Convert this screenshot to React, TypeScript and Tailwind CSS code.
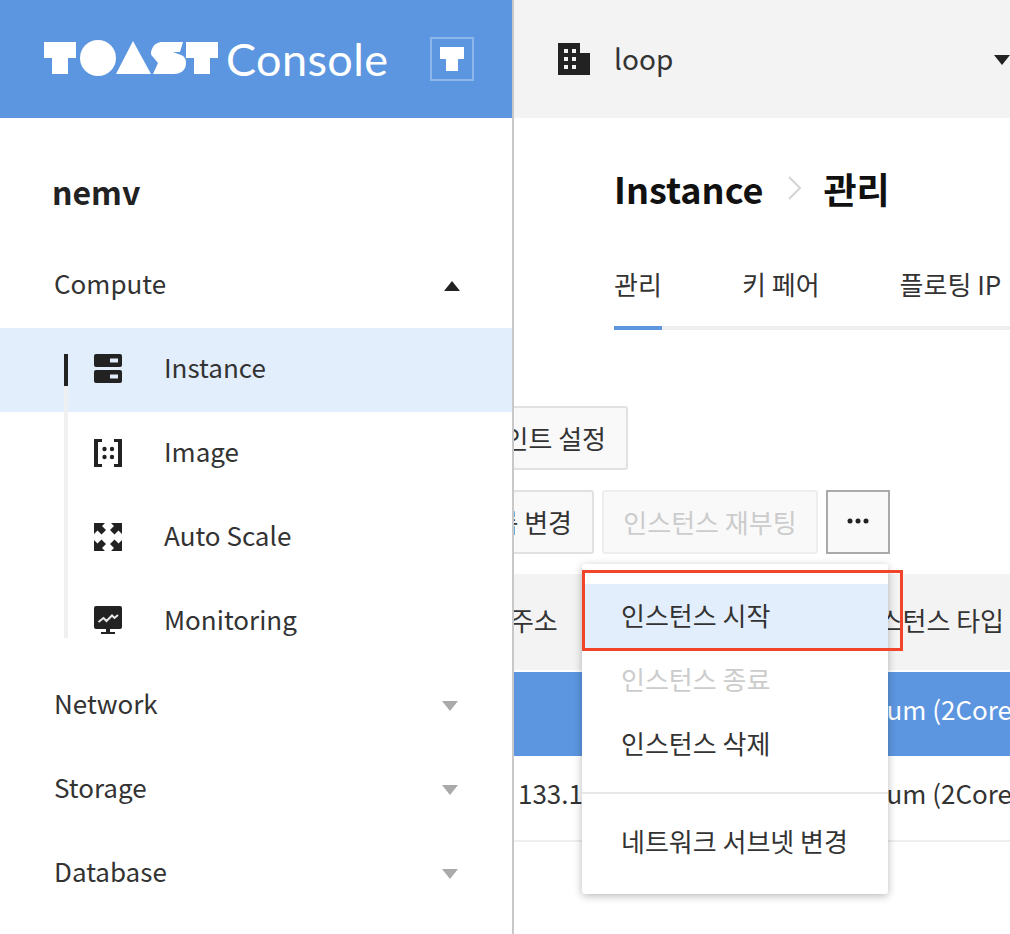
import React from "react";

const FONT = "font-['Noto_Sans_CJK_KR','Noto_Sans',sans-serif]";

function Logo() {
  return (
    <svg width="176" height="38" viewBox="44 42 176 38" className="shrink-0" aria-label="TOAST">
      <g fill="#fff">
        <path d="M44 44h32v16h-8v16H52V60h-8z" />
        <circle cx="98" cy="60" r="18" />
        <path d="M133 43l18 33h-35z" />
        <path d="M162 44h21l-3 10h-7l8 3c5 2 5 6 5 8 0 7-5 11-12 11h-21l5-11-5-6c-2-2-3-4-1-8 2-5 6-7 10-7z" />
        <path d="M186 44h32v16h-8v16h-16V60h-8z" />
      </g>
    </svg>
  );
}

function ServerIcon() {
  return (
    <svg width="30" height="30" viewBox="0 0 30 30">
      <rect x="1" y="0" width="28" height="13" rx="2" fill="#222" />
      <rect x="1" y="16" width="28" height="13" rx="2" fill="#222" />
      <rect x="17" y="4.5" width="8" height="4" fill="#e3eefc" />
      <rect x="17" y="20.5" width="8" height="4" fill="#e3eefc" />
    </svg>
  );
}
function ImageIcon() {
  return (
    <svg width="30" height="30" viewBox="0 0 30 30" fill="#222">
      <path d="M1 1h8v3H5v22h4v3H1zM29 1h-8v3h4v22h-4v3h8z" />
      <circle cx="11.500" cy="11" r="2.200" />
      <circle cx="19" cy="11" r="2.200" />
      <circle cx="11.500" cy="19" r="2.200" />
      <circle cx="19" cy="19" r="2.200" />
    </svg>
  );
}
function ScaleIcon() {
  return (
    <svg width="30" height="30" viewBox="0 0 30 30" fill="#222">
      <path d="M1 1h11l-3 3 4 4-4.500 4.500-4-4-3.500 3.500z" />
      <path d="M29 1H18l3 3-4 4 4.500 4.500 4-4 3.500 3.500z" />
      <path d="M1 29h11l-3-3 4-4-4.500-4.500-4 4L1 18z" />
      <path d="M29 29H18l3-3-4-4 4.500-4.500 4 4 3.500-3.500z" />
    </svg>
  );
}
function MonitorIcon() {
  return (
    <svg width="30" height="30" viewBox="0 0 30 30">
      <rect x="1" y="0" width="28" height="23" rx="2" fill="#222" />
      <path d="M13 23h4v3h5v2H8v-2h5z" fill="#222" />
      <path d="M5.500 16l5-4 3 3 5.500-5.500 2.500 2.500 3.500-3" fill="none" stroke="#e8e8e8" strokeWidth="2" />
    </svg>
  );
}
function BuildingIcon() {
  return (
    <svg width="34" height="34" viewBox="0 0 34 34">
      <path d="M1 1h22v10h10v22H1z" fill="#222" />
      <g fill="#f3f3f3">
        <rect x="7" y="7" width="4" height="4" />
        <rect x="15" y="7" width="4" height="4" />
        <rect x="7" y="15" width="4" height="4" />
        <rect x="15" y="15" width="4" height="4" />
        <rect x="7" y="23" width="4" height="4" />
        <rect x="15" y="23" width="4" height="4" />
      </g>
    </svg>
  );
}

function Caret({ up, color }: { up?: boolean; color: string }) {
  return (
    <svg width="16" height="10" viewBox="0 0 16 10" className="shrink-0">
      <path d={up ? "M8 0l8 10H0z" : "M0 0h16L8 10z"} fill={color} />
    </svg>
  );
}

function GroupRow({ label, up }: { label: string; up?: boolean }) {
  return (
    <div className={`flex h-[84px] items-center justify-between pl-[54px] text-[26px] text-[#333] ${up ? "pr-[52px]" : "pr-[54px]"}`}>
      <span className="pb-[8px]">{label}</span>
      <Caret up={up} color={up ? "#222" : "#aaa"} />
    </div>
  );
}

function SubRow({ label, icon, active }: { label: string; icon: React.ReactNode; active?: boolean }) {
  return (
    <div className={`flex h-[84px] items-center pb-[2px] pl-[93px] text-[26px] text-[#333] ${active ? "bg-[#e3eefc]" : ""}`}>
      <span className="flex w-[71px] shrink-0">{icon}</span>
      <span className="pb-[6px]">{label}</span>
    </div>
  );
}

function Sidebar() {
  return (
    <aside className="flex h-full w-[514px] shrink-0 flex-col overflow-hidden border-r-2 border-[#c8c8c8] bg-white">
      <div className="flex h-[118px] w-[514px] shrink-0 items-center bg-[#5c96e0] pl-[44px]">
        <Logo />
        <span className="ml-[6px] w-[166px] shrink-0 font-['Lato',sans-serif] text-[45px] leading-none font-normal tracking-[0.4px] text-white">Console</span>
        <div className="ml-[38px] flex h-[44px] w-[44px] items-center justify-center border-2 border-[#8db6ea]">
          <svg width="24" height="24" viewBox="0 0 24 24">
            <path d="M0 0h24v12h-6v12H6V12H0z" fill="#fff" />
          </svg>
        </div>
      </div>
      <div className="pt-[50px] pl-[52px] text-[32px] leading-[46px] font-bold text-[#222]">nemv</div>
      <div className="h-[30px] shrink-0" />
      <GroupRow label="Compute" up />
      <div className="relative">
        <div className="absolute top-[26px] bottom-[26px] left-[64px] z-10 w-[4px] bg-[#eeeeee]/90" />
        <div className="absolute top-[26px] left-[64px] z-10 h-[32px] w-[4px] bg-[#222]" />
        <SubRow label="Instance" icon={<ServerIcon />} active />
        <SubRow label="Image" icon={<ImageIcon />} />
        <SubRow label="Auto Scale" icon={<ScaleIcon />} />
        <SubRow label="Monitoring" icon={<MonitorIcon />} />
      </div>
      <GroupRow label="Network" />
      <GroupRow label="Storage" />
      <GroupRow label="Database" />
    </aside>
  );
}

function Btn({ children, disabled, className = "" }: { children: React.ReactNode; disabled?: boolean; className?: string }) {
  return (
    <div
      className={`flex h-[64px] shrink-0 items-center justify-center rounded-[3px] border-2 bg-[#f9f9f9] pb-[2px] text-[26px] whitespace-nowrap ${
        disabled ? "border-[#eeeeee] text-[#cccccc]" : "border-[#e1e1e1] text-[#333]"
      } ${className}`}
    >
      {children}
    </div>
  );
}

function Menu() {
  return (
    <div className="absolute top-[564px] left-[68px] z-20 w-[306px] rounded-[3px] bg-white py-[20px] text-[26px] text-[#333] shadow-[0_2px_8px_rgba(0,0,0,0.28)]">
      <div className="flex h-[64px] items-center bg-[#e3eefc] pb-[4px] pl-[39px]">인스턴스 시작</div>
      <div className="flex h-[64px] items-center pb-[4px] pl-[39px] text-[#cccccc]">인스턴스 종료</div>
      <div className="flex h-[64px] items-center pb-[4px] pl-[39px]">인스턴스 삭제</div>
      <div className="my-[16px] h-[2px] bg-[#e8e8e8]" />
      <div className="flex h-[64px] items-center pb-[4px] pl-[39px]">네트워크 서브넷 변경</div>
    </div>
  );
}

function Main() {
  return (
    <main className="relative h-full min-w-0 flex-1 overflow-hidden bg-white">
      <div className="flex h-[118px] items-center justify-between bg-[#f3f3f3] pl-[43px]">
        <div className="flex items-center">
          <BuildingIcon />
          <span className="ml-[23px] pb-[2px] text-[28px] text-[#333]">loop</span>
        </div>
        <div className="pt-[2px]">
          <Caret color="#222" />
        </div>
      </div>
      <div className="flex h-[144px] items-center pb-[4px] pl-[100px]">
        <span className="text-[36px] leading-none font-bold text-[#111]">Instance</span>
        <svg width="16" height="24" viewBox="0 0 16 24" className="ml-[24px]">
          <path d="M2 1l11 11L2 23" fill="none" stroke="#d4d4d4" strokeWidth="2" />
        </svg>
        <span className="ml-[20px] text-[36px] leading-none font-bold text-[#111]">관리</span>
      </div>
      <div className="ml-[100px] flex h-[68px] w-[500px] border-b-4 border-[#eeeeee] text-[26px] text-[#333]">
        <div className="-mb-[4px] flex w-[48px] justify-center border-b-4 border-[#5c96e0] pt-[2px] whitespace-nowrap">관리</div>
        <div className="ml-[80px] pt-[2px] whitespace-nowrap">키 페어</div>
        <div className="ml-[80px] pt-[2px] whitespace-nowrap">플로팅 IP</div>
      </div>
      <div className="mt-[76px] flex w-[114px] justify-end">
        <Btn className="px-[20px]">엔드포인트 설정</Btn>
      </div>
      <div className="mt-[20px] flex items-start">
        <div className="flex w-[80px] justify-end">
          <Btn className="px-[20px]">보안 그룹 변경</Btn>
        </div>
        <Btn disabled className="ml-[8px] w-[216px]">인스턴스 재부팅</Btn>
        <div className="ml-[8px] flex h-[64px] w-[64px] items-center justify-center border-2 border-[#aaaaaa] bg-[#f9f9f9] pb-[2px]">
          <svg width="22" height="6" viewBox="0 0 22 6" fill="#222">
            <circle cx="3" cy="3" r="2.500" />
            <circle cx="11" cy="3" r="2.500" />
            <circle cx="19" cy="3" r="2.500" />
          </svg>
        </div>
      </div>
      <div className="mt-[20px] w-[496px] text-[26px]">
        <div className="flex h-[98px] items-center justify-between border-b-2 border-white bg-[#f3f3f3] pr-[6px] pb-[6px] text-[#333]">
          <span className="-ml-[34px] whitespace-nowrap">IP 주소</span>
          <span className="whitespace-nowrap">인스턴스 타입</span>
        </div>
        <div className="flex h-[84px] items-center bg-[#5c96e0] pb-[12px] text-white">
          <span className="ml-[265px] whitespace-nowrap">m2.medium (2Core, 4GB)</span>
        </div>
        <div className="flex h-[86px] items-center border-b-2 border-[#eeeeee] pb-[12px] text-[#333]">
          <span className="ml-[4px] w-[261px] shrink-0 whitespace-nowrap">133.186.1.1</span>
          <span className="whitespace-nowrap">m2.medium (2Core, 4GB)</span>
        </div>
      </div>
      <Menu />
      <div className="pointer-events-none absolute top-[570px] left-[68px] z-30 h-[81px] w-[321px] border-[3px] border-[#f0452a]" />
    </main>
  );
}

export default function App() {
  return (
    <div className={`flex h-[934px] w-[1010px] overflow-hidden bg-white ${FONT}`}>
      <Sidebar />
      <Main />
    </div>
  );
}
